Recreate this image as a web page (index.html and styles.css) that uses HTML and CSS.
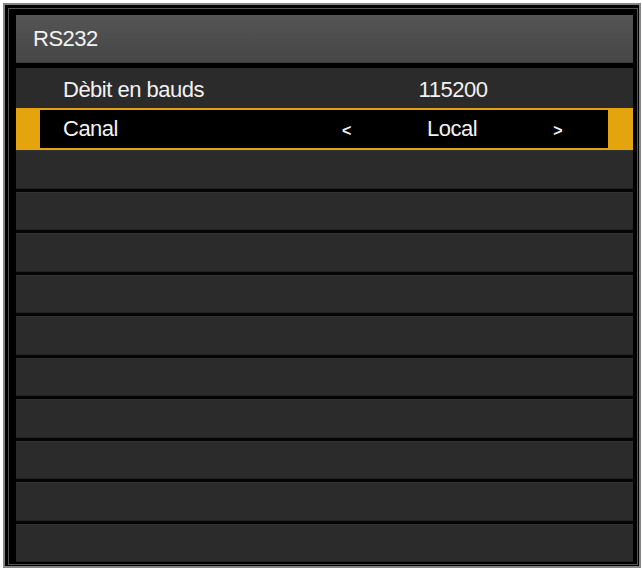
FILE: index.html
```html
<!DOCTYPE html>
<html lang="fr">
<head>
  <meta charset="UTF-8">
  <meta name="viewport" content="width=device-width, initial-scale=1.0">
  <title>RS232</title>
  <link rel="stylesheet" href="styles.css">
</head>
<body>
  <div class="bezel">
    <div class="panel">
      <header class="menu-title">RS232</header>

      <div class="menu-list">
        <div class="menu-row">
          <span class="label">Dèbit en bauds</span>
          <span class="value">115200</span>
        </div>

        <div class="menu-row selected">
          <div class="selected-inner">
            <span class="label">Canal</span>
            <span class="value choice">
              <span class="arrow">&lt;</span>
              <span>Local</span>
              <span class="arrow">&gt;</span>
            </span>
          </div>
        </div>

        <div class="empty-rows">
          <div class="menu-row blank"></div>
          <div class="menu-row blank"></div>
          <div class="menu-row blank"></div>
          <div class="menu-row blank"></div>
          <div class="menu-row blank"></div>
          <div class="menu-row blank"></div>
          <div class="menu-row blank"></div>
          <div class="menu-row blank"></div>
          <div class="menu-row blank"></div>
          <div class="menu-row blank"></div>
        </div>
      </div>
    </div>
  </div>
</body>
</html>
```

FILE: styles.css
```css
html, body {
  height: 100%;
}
body {
  margin: 0;
  background-color: #ffffff;
  font-family: "Liberation Sans", Arial, sans-serif;
  color: #f2f2f2;
}

/* outer frame: grey line, black, thin grey line, black */
.bezel {
  box-sizing: border-box;
  height: calc(100% - 5px);
  margin: 3px 1px 2px 3px;
  border: 2px solid #858585;
  padding: 3px 1px 1px 3px;
  background-color: #000;
}
.panel {
  box-sizing: border-box;
  height: 100%;
  border: 1px solid #545454;
  padding: 6px 4px 2px 7px;
  background-color: #000;
  display: flex;
  flex-direction: column;
}

.menu-title {
  height: 48px;
  flex: none;
  box-sizing: border-box;
  display: flex;
  align-items: center;
  padding-left: 17px;
  background: linear-gradient(#545454, #474747);
  border-bottom: 1px solid #3a3a3a;
  font-size: 22px;
  letter-spacing: -0.5px;
}

.menu-list {
  flex: 1;
  margin-top: 5px;
  display: flex;
  flex-direction: column;
}

.menu-row {
  height: 40px;
  flex: none;
  box-sizing: border-box;
  display: grid;
  grid-template-columns: 273px 234px;
  align-items: center;
  padding: 3px 0 0 47px;
  background-color: #2b2b2b;
  font-size: 22px;
  letter-spacing: -0.5px;
}
.value {
  text-align: center;
}

/* highlighted row: orange frame with black centre */
.menu-row.selected {
  display: block;
  height: 42px;
  padding: 2px 25px 2px 24px;
  background-color: #e3a40e;
}
.selected-inner {
  height: 100%;
  display: grid;
  grid-template-columns: 275px 228px;
  align-items: center;
  padding-left: 23px;
  background-color: #000;
}
.choice {
  display: flex;
  justify-content: space-between;
  align-items: center;
}
.arrow {
  font-size: 16px;
  font-weight: bold;
  padding: 4px 4px 0;
}

.empty-rows {
  flex: 1;
  display: flex;
  flex-direction: column;
  gap: 3px;
  background-color: #050505;
}
.menu-row.blank {
  flex: 1;
  height: auto;
  padding: 0;
  box-shadow: inset 0 1px 0 #333, inset 0 -1px 0 #222;
}
```
